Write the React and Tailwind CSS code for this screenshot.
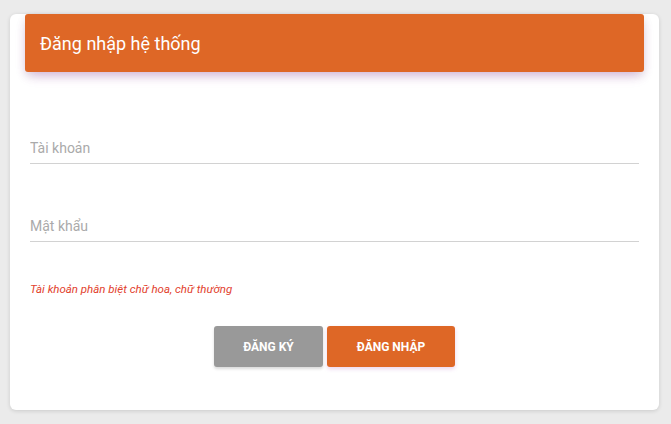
import React from 'react';

const font = { fontFamily: 'Roboto, "Noto Sans", sans-serif' };

const Field = ({ label, className }) => (
  <div className={`mx-[20px] border-b border-[#d2d2d2] pb-[5px] ${className}`}>
    <input
      type="text"
      placeholder={label}
      className="block w-full bg-transparent text-[14px] leading-[20px] text-[#555] outline-none placeholder:text-[#aaaaaa]"
    />
  </div>
);

const App = () => {
  return (
    <div className="min-h-screen bg-[#ebebeb] pl-[10px] pr-[12px] pt-[34px] pb-[14px]" style={font}>
      <div className="rounded-[6px] bg-white pb-[43px] shadow-[0_1px_4px_rgba(0,0,0,0.14)]">
        {/* Header */}
        <div className="mx-[15px] -mt-[20px] flex h-[58px] items-center rounded-[3px] bg-[#de6726] px-[15px] shadow-[0_6px_12px_-4px_rgba(156,39,176,0.3),0_4px_10px_rgba(0,0,0,0.1)]">
          <h4 className="text-[18px] font-normal text-white">Đăng nhập hệ thống</h4>
        </div>

        <Field label="Tài khoản" className="mt-[66px]" />
        <Field label="Mật khẩu" className="mt-[52px]" />

        <p className="mx-[20px] mt-[39px] text-[11.5px] leading-[16px] italic text-[#e2412d]">
          Tài khoản phân biệt chữ hoa, chữ thường
        </p>

        {/* Actions */}
        <div className="mt-[29px] flex justify-center gap-[4px]">
          <button className="h-[41px] w-[109px] rounded-[3px] bg-[#999999] text-[12px] font-bold uppercase text-white shadow-[0_2px_3px_rgba(0,0,0,0.15)]">
            Đăng ký
          </button>
          <button className="h-[41px] w-[128px] rounded-[3px] bg-[#de6726] text-[12px] font-bold uppercase text-white shadow-[0_2px_4px_rgba(156,39,176,0.2)]">
            Đăng nhập
          </button>
        </div>
      </div>
    </div>
  );
};

export default App;
